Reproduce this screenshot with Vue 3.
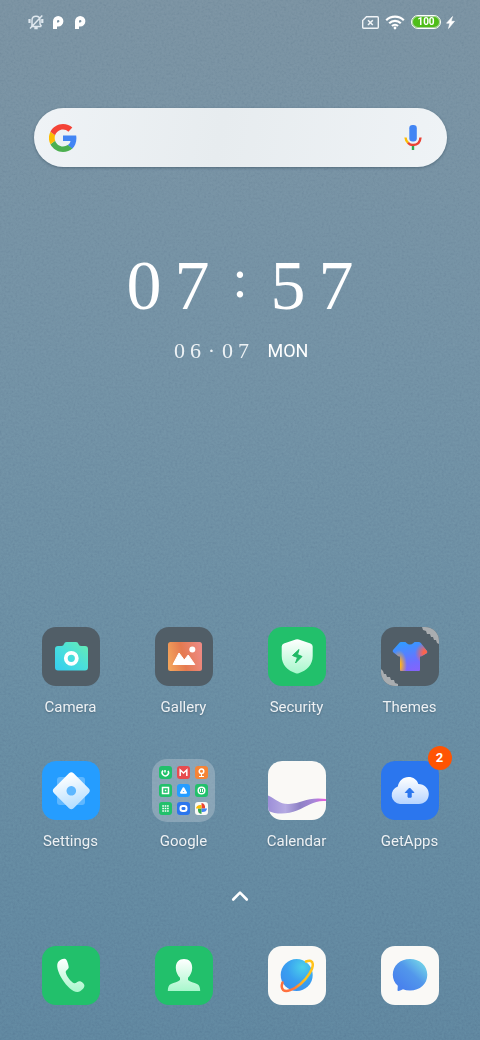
<script setup>
import { ref } from 'vue';

const query = ref('');
const time = ['0', '7', ':', '5', '7'];
const date = ['0', '6', '·', '0', '7'];

const apps = [
  { id: 'camera', label: 'Camera' },
  { id: 'gallery', label: 'Gallery' },
  { id: 'security', label: 'Security' },
  { id: 'themes', label: 'Themes' },
  { id: 'settings', label: 'Settings' },
  { id: 'google', label: 'Google' },
  { id: 'calendar', label: 'Calendar' },
  { id: 'getapps', label: 'GetApps', badge: 2 },
];
</script>

<template>
  <main class="home">
    <!-- Wallpaper grain -->
    <svg class="grain" aria-hidden="true">
      <filter id="noise" x="0" y="0" width="100%" height="100%">
        <feTurbulence type="fractalNoise" baseFrequency="0.45" numOctaves="2" seed="4" />
        <feColorMatrix type="saturate" values="0" />
        <feComponentTransfer><feFuncA type="linear" slope="0" intercept="1" /></feComponentTransfer>
      </filter>
      <rect width="100%" height="100%" filter="url(#noise)" />
    </svg>

    <header class="status">
      <div class="statusLeft">
        <svg class="bell" width="16" height="16" viewBox="0 0 16 16" fill="none" stroke="#dfe8ef" stroke-width="1.5">
          <path d="M3 12.500h10.300M4 12V6.500C4 3.800 5.600 2.300 8 2.300s4 1.500 4 4.200V10l1.500 2.300M2 14.500 14.300 1.500" />
          <path d="M6.300 14.200h3.400M1.500 5v4M14.300 5v4" stroke-width="2.200" />
        </svg>
        <svg v-for="n in 2" :key="n" width="12" height="15" viewBox="0 0 12 15" fill="none" stroke="#fff">
          <path d="M3 14V6.200a3.200 3.200 0 1 1 3.200 3.200H5" stroke-width="4" />
        </svg>
      </div>
      <div class="statusRight">
        <svg width="17" height="13" viewBox="0 0 17 13" fill="none" stroke="#f0f4f7" stroke-width="1.4">
          <path d="M4.500.7H15.300q1 0 1 1v9.600q0 1-1 1H1.700q-1 0-1-1V4.500z" />
          <path d="M6 4.200l4.800 4.800M10.800 4.200 6 9" stroke-width="1.600" />
        </svg>
        <svg width="20" height="15" viewBox="0 0 20 15" fill="none" stroke="#fff" stroke-width="2.200">
          <path d="M1.200 5.200a12.500 12.500 0 0 1 17.600 0M4.200 8.200a8.300 8.300 0 0 1 11.600 0M7 11a4.300 4.300 0 0 1 6 0" />
          <circle cx="10" cy="13" r="1.400" fill="#fff" stroke="none" />
        </svg>
        <span class="battery">100</span>
        <svg class="bolt" width="9" height="13" viewBox="0 0 9 13" fill="#fff" stroke="#fff" stroke-width=".6">
          <path d="M6.500.5.500 7.200h3.300L2.500 12.500 8.500 5.300H5.200z" />
        </svg>
      </div>
    </header>

    <form class="search" role="search" @submit.prevent>
      <button class="iconButton" type="submit" aria-label="Google">
        <svg width="28" height="28" viewBox="0 0 48 48">
          <path fill="#4285f4" d="M47 24.500c0-1.700-.2-3.200-.5-4.700H24v9.400h12.900c-.6 3-2.300 5.500-4.800 7.200l7.700 6C44.400 38.200 47 31.900 47 24.500z" />
          <path fill="#4caf50" d="M24 48c6.500 0 12-2.100 16-5.800l-7.900-6c-2.200 1.500-4.900 2.300-8.100 2.300-6.300 0-11.600-4.200-13.500-9.900l-8 6.200C6.500 42.600 14.600 48 24 48z" />
          <path fill="#fbbc05" d="M10.500 28.600a14.500 14.500 0 0 1 0-9.200l-8-6.200a24 24 0 0 0 0 21.600z" />
          <path fill="#f44336" d="M24 9.500c3.500 0 6.700 1.200 9.200 3.600L40 6.200C35.900 2.400 30.500 0 24 0 14.600 0 6.500 5.400 2.500 13.200l8 6.200C12.400 13.700 17.700 9.500 24 9.500z" />
        </svg>
      </button>
      <input v-model="query" class="searchInput" type="text" aria-label="Search" />
      <button class="iconButton" type="button" aria-label="Voice search">
        <svg width="20" height="26" viewBox="0 0 20 26">
          <rect x="6.300" y="0" width="7.500" height="16.500" rx="3.300" fill="#4285f4" />
          <g fill="none" stroke-width="2.400">
            <path d="M2.500 12.500q.3 3.500 2.700 5.500" stroke="#fbbc05" />
            <path d="M5 17.800Q7.200 20 10 20q7 0 7.500-7.500" stroke="#ea4335" />
            <path d="M10 21v4" stroke="#34a853" />
          </g>
        </svg>
      </button>
    </form>

    <section class="clock">
      <time class="time">
        <span v-for="(c, i) in time" :key="i" :class="{ colon: c === ':' }">{{ c }}</span>
      </time>
      <div class="dateRow">
        <time class="date"><span v-for="(c, i) in date" :key="i">{{ c }}</span></time>
        <span class="day">MON</span>
      </div>
    </section>

    <nav class="apps" aria-label="Apps">
      <button v-for="app in apps" :key="app.id" class="app" type="button">
        <span class="slot">
          <svg v-if="app.id === 'camera'" class="tile dark" viewBox="0 0 58 59">
            <defs>
              <linearGradient id="cam" x1="0" y1="1" x2="1" y2="0">
                <stop offset="0" stop-color="#35cdf0" /><stop offset=".5" stop-color="#4adfdc" /><stop offset="1" stop-color="#68edb0" />
              </linearGradient>
            </defs>
            <path fill="url(#cam)" d="M16 19h3.500q2 0 2.500-2 .6-2 2.500-2h9.500q2 0 2.500 2t2.500 2h4q3 0 3 3v18.500q0 3-3 3H16q-3 0-3-3V22q0-3 3-3z" />
            <circle cx="29.300" cy="31.300" r="5.500" fill="none" stroke="#fff" stroke-width="3.800" />
          </svg>

          <svg v-else-if="app.id === 'gallery'" class="tile dark" viewBox="0 0 58 59">
            <defs>
              <linearGradient id="gal" x1="0" y1=".6" x2="1" y2=".4">
                <stop offset="0" stop-color="#f3a45c" /><stop offset=".45" stop-color="#e57a50" /><stop offset="1" stop-color="#ee8a83" />
              </linearGradient>
            </defs>
            <rect x="13" y="15" width="34" height="29" rx="2.500" fill="url(#gal)" />
            <circle cx="37.300" cy="22.500" r="3" fill="#fff" />
            <path fill="#fff" stroke="#fff" stroke-linejoin="round" d="M18 37.500 24 26l5.300 7 3.900-5 6.600 9.500z" />
          </svg>

          <svg v-else-if="app.id === 'security'" class="tile green" viewBox="0 0 58 59">
            <defs>
              <linearGradient id="pale" x1="0" y1="0" x2="0" y2="1">
                <stop offset="0" stop-color="#fff" /><stop offset="1" stop-color="#a8f7cc" />
              </linearGradient>
            </defs>
            <path fill="url(#pale)" d="M27.700 12.500q1.500-.7 3 0L42.500 16.500q2.200.8 2.200 3V29c0 9-6 14.500-14 17.200q-1.500.5-3 0C19.700 43.500 13.700 38 13.700 29v-9.500q0-2.200 2.200-3z" />
            <path fill="#20b965" d="M31 22.500 24.500 28.500l5 2-2 5.500 6.500-6.500-4.500-2z" stroke="#20b965" stroke-linejoin="round" />
          </svg>

          <svg v-else-if="app.id === 'themes'" class="tile dark" viewBox="0 0 58 59">
            <defs>
              <linearGradient id="shirt" x1=".4" y1="0" x2=".65" y2="1">
                <stop offset=".2" stop-color="#2ba0ff" /><stop offset=".6" stop-color="#706dff" /><stop offset="1" stop-color="#a754f5" />
              </linearGradient>
              <radialGradient id="sleeve"><stop offset=".25" stop-color="#fa654e" /><stop offset="1" stop-color="#fa654e" stop-opacity="0" /></radialGradient>
              <radialGradient id="hem"><stop offset=".2" stop-color="#ffb21f" /><stop offset="1" stop-color="#ffb21f" stop-opacity="0" /></radialGradient>
              <clipPath id="shirtShape">
                <path d="M20 15h4q1 0 1.500 1 3.300 3 7 0 .5-1 1.500-1h3.500q1.500 0 2.500 1.200l6 7.800q.8 1.200-.3 2.200L41 29q-1 .8-2 .2V43q0 1-1 1H20q-1 0-1-1V29.200q-1 .6-2-.2l-4.800-3.800q-1-1-.2-2.200l6-6.800Q19 15 20 15z" />
              </clipPath>
            </defs>
            <g clip-path="url(#shirtShape)">
              <rect width="58" height="59" fill="url(#shirt)" />
              <circle cx="45" cy="26" r="11" fill="url(#sleeve)" />
              <ellipse cx="18" cy="38" rx="8" ry="15" fill="url(#hem)" />
            </g>
            <path fill="#a9adb0" d="M41 0h17v17l-2-1-1-3-2 0-1-3-2 0-1-3-3 0-1-3-3-1z M0 42l2 2 1 3 2 0 1 3 3 0 1 3 3 0 1 3 3 1v2H0z" />
          </svg>

          <svg v-else-if="app.id === 'settings'" class="tile blue" viewBox="0 0 58 59">
            <defs>
              <linearGradient id="gear" x1=".3" y1="0" x2=".6" y2="1">
                <stop offset=".1" stop-color="#fff" /><stop offset="1" stop-color="#b0dcff" />
              </linearGradient>
            </defs>
            <rect x="15" y="16" width="28" height="28" rx="3" fill="#a5d8ff" opacity=".45" />
            <path fill="url(#gear)" fill-rule="evenodd" d="M27 12.200q2.300-2 4.600 0L46.800 27.500q2 2.200 0 4.400L31.600 47.200q-2.300 2-4.600 0L11.800 31.900q-2-2.200 0-4.400zM29.300 25a4.800 4.800 0 1 0 .01 0z" />
          </svg>

          <span v-else-if="app.id === 'google'" class="folder">
            <svg class="mini green" viewBox="0 0 13 13"><path d="M4 4.500a3.200 3.200 0 1 0 5 .4M6 6.500V4" /></svg>
            <svg class="mini red" viewBox="0 0 13 13"><path d="M3.200 10V4l3.300 3 3.300-3v6" /></svg>
            <svg class="mini orange" viewBox="0 0 13 13"><circle cx="6.500" cy="5.300" r="2.300" /><path d="M6.500 7.500V10M4 10.500h5" stroke-width="1" /></svg>
            <svg class="mini green" viewBox="0 0 13 13"><rect x="3.500" y="3.500" width="6" height="6" /><path d="M5.800 6.500h1.500" /></svg>
            <svg class="mini blue" viewBox="0 0 13 13"><path d="M6.500 4.200 4 8.700h5z" stroke-width="2" stroke-linejoin="round" /></svg>
            <svg class="mini green" viewBox="0 0 13 13"><circle cx="6.500" cy="6.500" r="3.300" /><path d="M5.500 5v3M7.500 5v3" stroke-width="1" /></svg>
            <svg class="mini green" viewBox="0 0 13 13"><path d="M3.300 4h7M3.300 6.500h7M3.300 9h7" stroke-dasharray="1.600 .8" /></svg>
            <svg class="mini royal" viewBox="0 0 13 13"><rect x="3.500" y="4" width="6" height="5" rx="2.300" stroke-width="2" /></svg>
            <svg class="mini white" viewBox="0 0 13 13">
              <path fill="#ea4335" d="M6.500 1q4 .5 3.500 5.500H6.500z" /><path fill="#4285f4" d="M12 6.500q-.5 4-5.500 3.500V6.500z" />
              <path fill="#34a853" d="M6.500 12q-4-.5-3.500-5.500h3.500z" /><path fill="#fbbc05" d="M1 6.500q.5-4 5.500-3.500v3.500z" />
            </svg>
          </span>

          <svg v-else-if="app.id === 'calendar'" class="tile white" viewBox="0 0 58 59">
            <defs>
              <linearGradient id="wave">
                <stop offset="0" stop-color="#9d8fd8" /><stop offset=".3" stop-color="#b5aae2" /><stop offset=".55" stop-color="#8d80c4" />
                <stop offset=".8" stop-color="#a786d8" /><stop offset="1" stop-color="#ed58df" />
              </linearGradient>
            </defs>
            <path fill="url(#wave)" d="M0 34.500c8 3.500 12 9 21 8.500C32 42.500 38 37.500 50 37.500q5 0 8 .5v2C46 39 40 45 29 49.500 20 53.500 8 53.500 0 50z" />
          </svg>

          <svg v-else class="tile royal" viewBox="0 0 58 59">
            <defs>
              <linearGradient id="cloud" x1="0" y1="0" x2="0" y2="1">
                <stop offset="0" stop-color="#fff" /><stop offset="1" stop-color="#b6d4ff" />
              </linearGradient>
            </defs>
            <path fill="url(#cloud)" d="M19 43a9 9 0 0 1-2.200-17.500C17.800 20 22 16 27.500 16c4.700 0 8.700 2.700 9.800 7C43.500 23 47.800 27.500 47.800 33c0 5.700-4.200 10-10 10z" />
            <path fill="#2b76ee" stroke="#2b76ee" stroke-linejoin="round" d="m28.600 27 4.300 4.500h-2.700v4.700H27v-4.700h-2.700z" />
          </svg>

          <span v-if="app.badge" class="badge">{{ app.badge }}</span>
        </span>
        <span class="label">{{ app.label }}</span>
      </button>
    </nav>

    <button class="drawer" type="button" aria-label="All apps">
      <svg width="18" height="12" viewBox="0 0 18 12" fill="none" stroke="#fff" stroke-width="2.600" stroke-linecap="round" stroke-linejoin="round">
        <path d="M2.200 9.500 9 2.700l6.800 6.800" />
      </svg>
    </button>

    <nav class="dock" aria-label="Dock">
      <button class="app" type="button" aria-label="Phone">
        <svg class="tile green" viewBox="0 0 58 59">
          <path fill="url(#pale)" d="M16.500 15.500c2-2.300 6.500-4 8-1.600 1 1.700 2 5 2.200 7 .2 2.200-3 3.200-3 5.200 0 3 5.500 10.500 8.500 11.200 2 .4 3.600-2.600 6-2 1.400.4 3.300 2 4 3.400 1.300 2.700-3.500 7-6.500 7.300C27 47 10.500 22.500 16.500 15.500z" />
        </svg>
      </button>
      <button class="app" type="button" aria-label="Contacts">
        <svg class="tile green" viewBox="0 0 58 59">
          <path fill="url(#pale)" d="M29 13c5 0 8.200 3.300 8.200 8.700 0 4.500-2 7.800-4.200 10v2.200c2 1.800 6 2.600 9 4 2.500 1.200 3.200 3.500 3.200 7.200H12.800c0-3.700.7-6 3.200-7.200 3-1.400 7-2.200 9-4v-2.200c-2.200-2.200-4.200-5.500-4.200-10C20.800 16.300 24 13 29 13z" />
        </svg>
      </button>
      <button class="app" type="button" aria-label="Browser">
        <svg class="tile white" viewBox="0 0 58 59">
          <defs>
            <radialGradient id="planet" cx=".68" cy=".25" r=".8">
              <stop offset="0" stop-color="#4bd0eb" /><stop offset=".6" stop-color="#399ff0" /><stop offset="1" stop-color="#3a91ee" />
            </radialGradient>
            <linearGradient id="ring"><stop offset=".35" stop-color="#ff713f" /><stop offset=".75" stop-color="#ffc21a" /></linearGradient>
          </defs>
          <circle cx="28.700" cy="29" r="16" fill="url(#planet)" />
          <path fill="none" stroke="url(#ring)" stroke-width="2.500" stroke-linecap="round" d="M38 15.500c4-1.500 6.500-.8 6.800 2.500.4 5-5.300 14-12.300 20-7 6-14.500 8.500-17.300 6-2-2-1.600-5-.7-7.500" />
        </svg>
      </button>
      <button class="app" type="button" aria-label="Messages">
        <svg class="tile white" viewBox="0 0 58 59">
          <defs>
            <linearGradient id="bubble" x1=".2" y1=".8" x2=".9" y2=".1">
              <stop offset="0" stop-color="#4983ed" /><stop offset=".5" stop-color="#5297eb" /><stop offset="1" stop-color="#74d6e8" />
            </linearGradient>
          </defs>
          <path fill="url(#bubble)" d="M29 13c10 0 17.300 6.500 17.300 15.800S39 44.500 29 44.500q-4 0-7-1.300-2 1.300-4.500 1.800-1 .2-1-1l.3-4.200C13.500 37 11.800 33 11.800 28.800 11.800 19.500 19 13 29 13z" />
        </svg>
      </button>
    </nav>
  </main>
</template>

<style>
body {
  margin: 0;
}
</style>

<style scoped>
.home {
  position: relative;
  isolation: isolate;
  display: flex;
  flex-direction: column;
  box-sizing: border-box;
  min-height: 100vh;
  padding-bottom: 35px;
  background: linear-gradient(#748c9d, #6d8ba0 35%, #64879e 65%, #5b809a);
  color: #fff;
  font-family: Roboto, "Liberation Sans", sans-serif;
  overflow: hidden;
}

.grain {
  position: absolute;
  inset: 0;
  z-index: -1;
  width: 100%;
  height: 100%;
  opacity: 0.12;
  mix-blend-mode: overlay;
}

button {
  padding: 0;
  border: 0;
  background: none;
  color: inherit;
  font: inherit;
}

/* Status bar */
.status {
  display: flex;
  justify-content: space-between;
  height: 44px;
  padding: 0 25px 0 28px;
}

.statusLeft,
.statusRight {
  display: flex;
  align-items: center;
}

.statusLeft {
  gap: 10px;
}

.bell {
  margin-right: -2px;
}

.statusRight {
  gap: 6px;
}

.battery {
  box-sizing: border-box;
  width: 30px;
  height: 14px;
  border: 1px solid #fff;
  border-radius: 7px;
  background: #4fbd19;
  box-shadow: inset 0 0 0 1px #a5cf9c;
  font-size: 10px;
  font-weight: 700;
  line-height: 12px;
  text-align: center;
}

.bolt {
  margin-left: -1px;
}

/* Search bar */
.search {
  display: flex;
  align-items: center;
  justify-content: space-between;
  height: 59px;
  margin: 64px 33px 0 34px;
  padding: 0 24px 0 15px;
  box-sizing: border-box;
  border-radius: 30px;
  background: linear-gradient(100deg, #eff3f6, #e7ecef 45%, #eff3f6);
  box-shadow: 0 1px 3px rgba(30, 50, 65, 0.4);
}

.iconButton {
  display: flex;
}

.searchInput {
  flex: 1;
  min-width: 0;
  height: 40px;
  margin: 0 12px;
  border: 0;
  outline: 0;
  background: none;
  color: #333;
  font: inherit;
}

/* Clock */
.clock {
  display: flex;
  flex-direction: column;
  align-items: center;
  margin-top: 84px;
  font-family: "Liberation Serif", serif;
}

.time {
  display: grid;
  grid-template-columns: repeat(5, 48px);
  font-size: 70px;
  line-height: 70px;
  text-align: center;
}

.colon {
  font-size: 54px;
  line-height: 56px;
}

.dateRow {
  display: flex;
  align-items: center;
  gap: 16px;
  margin-top: 18px;
}

.date {
  display: grid;
  grid-template-columns: repeat(5, 16px);
  color: #edf2f5;
  font-size: 22px;
  line-height: 24px;
  text-align: center;
}

.day {
  font-family: Roboto, sans-serif;
  font-size: 18px;
  line-height: 24px;
}

/* App grid and dock */
.apps,
.dock {
  display: grid;
  grid-template-columns: repeat(4, 1fr);
  row-gap: 44px;
  padding: 0 14px;
}

.apps {
  margin-top: auto;
}

.app {
  display: flex;
  flex-direction: column;
  align-items: center;
}

.slot {
  position: relative;
  display: flex;
  align-items: center;
  justify-content: center;
  width: 58px;
  height: 59px;
}

.tile {
  flex: none;
  width: 58px;
  height: 59px;
  border-radius: 14px;
}

.dark {
  background: #515e67;
}

.green {
  background: #22c06b;
}

.blue {
  background: #259dff;
}

.royal {
  background: #2b76ee;
}

.white {
  background: #faf9f6;
}

.red {
  background: #e84c4f;
}

.orange {
  background: #f58436;
}

.folder {
  display: grid;
  flex: none;
  grid-template-columns: repeat(3, 13px);
  gap: 5px;
  padding: 7px;
  border-radius: 15px;
  background: rgba(185, 200, 212, 0.42);
}

.mini {
  width: 13px;
  height: 13px;
  border-radius: 3px;
  fill: none;
  stroke: #fff;
  stroke-width: 1.5;
}

.mini.white {
  stroke: none;
}

.badge {
  position: absolute;
  top: -15px;
  right: -13px;
  width: 24px;
  height: 24px;
  border-radius: 50%;
  background: #ff5403;
  font-size: 13px;
  font-weight: 700;
  line-height: 24px;
  text-align: center;
}

.label {
  margin-top: 11px;
  color: #edf1f4;
  font-size: 15px;
  line-height: 20px;
  text-shadow: 0 1px 2px rgba(30, 50, 65, 0.4);
}

.drawer {
  display: flex;
  align-self: center;
  margin: 39px 0 44px;
}
</style>
